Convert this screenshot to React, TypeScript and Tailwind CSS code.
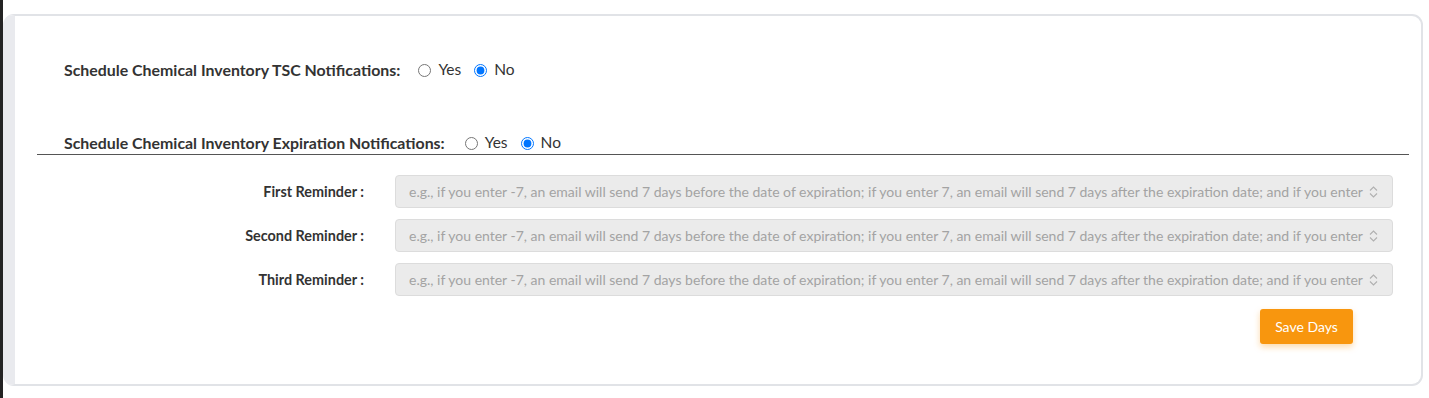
const hint =
  "e.g., if you enter -7, an email will send 7 days before the date of expiration; if you enter 7, an email will send 7 days after the expiration date; and if you enter";

function YesNo({ name, gap }: { name: string; gap: string }) {
  return (
    <div className={`flex items-center text-[15.5px] text-[#333] ${gap}`}>
      <input type="radio" name={name} className="m-0 h-[13px] w-[13px]" />
      <span className="ml-[7px]">Yes</span>
      <input type="radio" name={name} defaultChecked className="m-0 ml-[13px] h-[13px] w-[13px]" />
      <span className="ml-[7px]">No</span>
    </div>
  );
}

function Reminder({ label }: { label: string }) {
  return (
    <div className="flex items-center">
      <label className="w-[349px] text-right text-[14.4px] font-bold text-[#333]">{label}</label>
      <div className="ml-[31px] flex h-[33px] w-[998px] items-center rounded-[4px] border border-[#dcdcdc] bg-[#ebebeb] pl-[13px] pr-[14px]">
        <span className="flex-1 overflow-hidden whitespace-nowrap text-[14px] text-[#a3a3a3]">{hint}</span>
        <svg width="9" height="14" viewBox="0 0 9 14" className="ml-[2px] shrink-0">
          <path d="M1 5.5 L4.5 2 L8 5.5 M1 8.5 L4.5 12 L8 8.5" fill="none" stroke="#b0b0b0" strokeWidth="1.1" />
        </svg>
      </div>
    </div>
  );
}

export default function App() {
  return (
    <div className="flex h-[398px] w-[1429px] bg-white font-['Lato','Open_Sans',sans-serif]">
      <div className="w-[3px] bg-[#232323]" />
      <div className="flex-1 pb-[12px] pr-[6px] pt-[14px]">
        <div className="h-full rounded-[11px] border-2 border-l-[12px] border-[#e1e3e7] border-l-[#e9eaee] bg-white">
          <div className="ml-[49px] mt-[44px] flex h-[20px] items-center">
            <span className="text-[15.9px] font-bold text-[#333]">Schedule Chemical Inventory TSC Notifications:</span>
            <YesNo name="tsc" gap="ml-[18px]" />
          </div>
          <div className="ml-[49px] mt-[53px] flex h-[20px] items-center">
            <span className="text-[15.9px] font-bold text-[#333]">Schedule Chemical Inventory Expiration Notifications:</span>
            <YesNo name="exp" gap="ml-[20px]" />
          </div>
          <div className="ml-[22px] mr-[12px] mt-[1px] h-[1px] bg-[#555]" />
          <div className="mt-[20px] flex flex-col gap-[11px]">
            <Reminder label="First Reminder :" />
            <Reminder label="Second Reminder :" />
            <Reminder label="Third Reminder :" />
          </div>
          <div className="ml-[1245px] mt-[13px]">
            <button className="h-[35px] w-[93px] rounded-[3px] bg-[#f8960e] text-[14px] text-white shadow-[0_3px_6px_rgba(248,150,14,0.35)]">
              Save Days
            </button>
          </div>
        </div>
      </div>
    </div>
  );
}
